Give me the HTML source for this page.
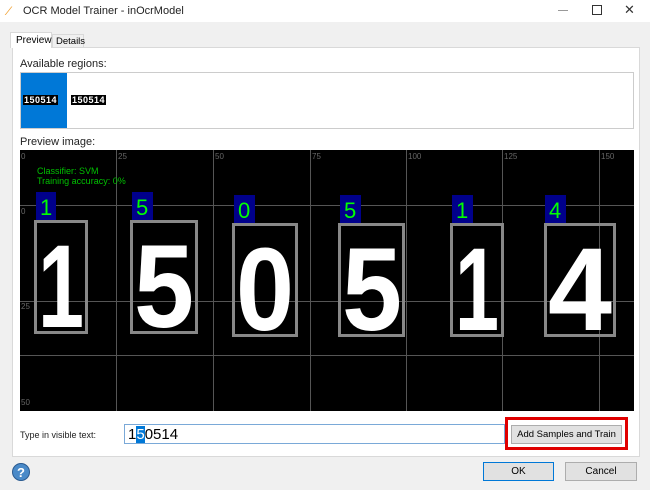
<!DOCTYPE html>
<html><head><style>
*{margin:0;padding:0;box-sizing:border-box}
body{width:650px;height:490px;background:#f0f0f0;font-family:"Liberation Sans",sans-serif;position:relative;overflow:hidden;font-size:11px;color:#000}
.a{position:absolute}
</style></head><body>
<div class="a" style="left:0;top:0;width:650px;height:22px;background:#fff"></div>
<div class="a" style="left:8px;top:4px;color:#f0a030;font-size:12px;font-style:italic">⁄</div>
<div class="a" style="left:23px;top:5px;font-size:11px;color:#222">OCR Model Trainer - inOcrModel</div>
<div class="a" style="left:558px;top:10px;width:10px;height:1px;background:#999"></div>
<div class="a" style="left:592px;top:5px;width:10px;height:10px;border:1px solid #333"></div>
<div class="a" style="left:624px;top:2px;font-size:13px;color:#333">✕</div>
<div class="a" style="left:12px;top:47px;width:628px;height:410px;background:#fff;border:1px solid #d9d9d9"></div>
<div class="a" style="left:10px;top:32px;width:42px;height:16px;background:#fff;border:1px solid #d9d9d9;border-bottom:none;padding:2px 0 0 5px;font-size:10px">Preview</div>
<div class="a" style="left:52px;top:34px;width:32px;height:14px;border:1px solid #d9d9d9;border-bottom:none;padding:1px 0 0 3px;font-size:9.5px">Details</div>
<div class="a" style="left:20px;top:58px;font-size:11px;color:#222">Available regions:</div>
<div class="a" style="left:20px;top:72px;width:614px;height:57px;border:1px solid #ccc;background:#fff"></div>
<div class="a" style="left:21px;top:73px;width:46px;height:55px;background:#0078d7"></div>
<div class="a" style="left:23px;top:95px;background:#000;color:#fff;font-size:9px;font-weight:bold;padding:0 1px;letter-spacing:.5px">150514</div>
<div class="a" style="left:71px;top:95px;background:#000;color:#fff;font-size:9px;font-weight:bold;padding:0 1px;letter-spacing:.5px">150514</div>
<div class="a" style="left:20px;top:136px;font-size:11px;color:#222">Preview image:</div>
<svg class="a" style="left:20px;top:150px" width="614" height="261" viewBox="20 150 614 261">
<rect x="20" y="150" width="614" height="261" fill="#000"/>
<g stroke="#555" stroke-width="1">
<line x1="116.5" y1="150" x2="116.5" y2="411"/><line x1="213.5" y1="150" x2="213.5" y2="411"/>
<line x1="310.5" y1="150" x2="310.5" y2="411"/><line x1="406.5" y1="150" x2="406.5" y2="411"/>
<line x1="502.5" y1="150" x2="502.5" y2="411"/><line x1="599.5" y1="150" x2="599.5" y2="411"/>
<line x1="20" y1="205.5" x2="634" y2="205.5"/><line x1="20" y1="301.5" x2="634" y2="301.5"/>
<line x1="20" y1="355.5" x2="634" y2="355.5"/>
</g>
<g fill="#666" font-size="8" font-family="Liberation Sans">
<text x="21" y="159">0</text><text x="118" y="159">25</text><text x="215" y="159">50</text><text x="312" y="159">75</text><text x="408" y="159">100</text><text x="504" y="159">125</text><text x="601" y="159">150</text>
<text x="21" y="214">0</text><text x="21" y="309">25</text><text x="21" y="405">50</text>
</g>
<text x="37" y="174" fill="#00c000" font-size="9" font-family="Liberation Sans">Classifier: SVM</text>
<text x="37" y="184" fill="#00c000" font-size="9" font-family="Liberation Sans">Training accuracy: 0%</text>
<g fill="#fff" font-size="118" font-weight="bold" font-family="Liberation Sans">
<text x="38" y="327" textLength="46" lengthAdjust="spacingAndGlyphs">1</text>
<text x="134" y="327" textLength="60" lengthAdjust="spacingAndGlyphs">5</text>
<text x="236" y="330" textLength="58" lengthAdjust="spacingAndGlyphs">0</text>
<text x="342" y="330" textLength="60" lengthAdjust="spacingAndGlyphs">5</text>
<text x="455" y="330" textLength="44" lengthAdjust="spacingAndGlyphs">1</text>
<text x="548" y="330" textLength="64" lengthAdjust="spacingAndGlyphs">4</text>
</g>
<g fill="none" stroke="#888" stroke-width="3">
<rect x="35.5" y="221.5" width="51" height="111"/><rect x="131.5" y="221.5" width="65" height="111"/>
<rect x="233.5" y="224.5" width="63" height="111"/><rect x="339.5" y="224.5" width="64" height="111"/>
<rect x="451.5" y="224.5" width="51" height="111"/><rect x="545.5" y="224.5" width="69" height="111"/>
</g>
<g fill="#00008b">
<rect x="36" y="192" width="20" height="28"/><rect x="132" y="192" width="21" height="28"/>
<rect x="234" y="195" width="21" height="28"/><rect x="340" y="195" width="21" height="28"/>
<rect x="452" y="195" width="21" height="28"/><rect x="545" y="195" width="21" height="28"/>
</g>
<g fill="#00ff00" font-size="22" font-family="Liberation Sans">
<text x="40" y="215">1</text><text x="136" y="215">5</text><text x="238" y="218">0</text>
<text x="344" y="218">5</text><text x="456" y="218">1</text><text x="549" y="218">4</text>
</g>
</svg>
<div class="a" style="left:20px;top:430px;font-size:9px;color:#222">Type in visible text:</div>
<div class="a" style="left:124px;top:424px;width:381px;height:20px;border:1px solid #7aa9d8;background:#fff;font-size:15px;padding:1px 0 0 3px">1<span style="background:#0078d7;color:#fff">5</span>0514</div>
<div class="a" style="left:505px;top:417px;width:123px;height:33px;border:3px solid #e00000"></div>
<div class="a" style="left:511px;top:425px;width:111px;height:19px;border:1px solid #adadad;background:#e1e1e1;font-size:9.5px;text-align:center;line-height:17px">Add Samples and Train</div>
<div class="a" style="left:12px;top:463px;width:18px;height:18px;border-radius:50%;background:#4a8ac8;border:1px solid #2a5a90;color:#fff;font-weight:bold;font-size:13px;text-align:center;line-height:17px">?</div>
<div class="a" style="left:483px;top:462px;width:71px;height:19px;border:1px solid #0078d7;background:#e1e1e1;font-size:10px;text-align:center;line-height:17px">OK</div>
<div class="a" style="left:565px;top:462px;width:72px;height:19px;border:1px solid #adadad;background:#e1e1e1;font-size:10px;text-align:center;line-height:17px">Cancel</div>
</body></html>
